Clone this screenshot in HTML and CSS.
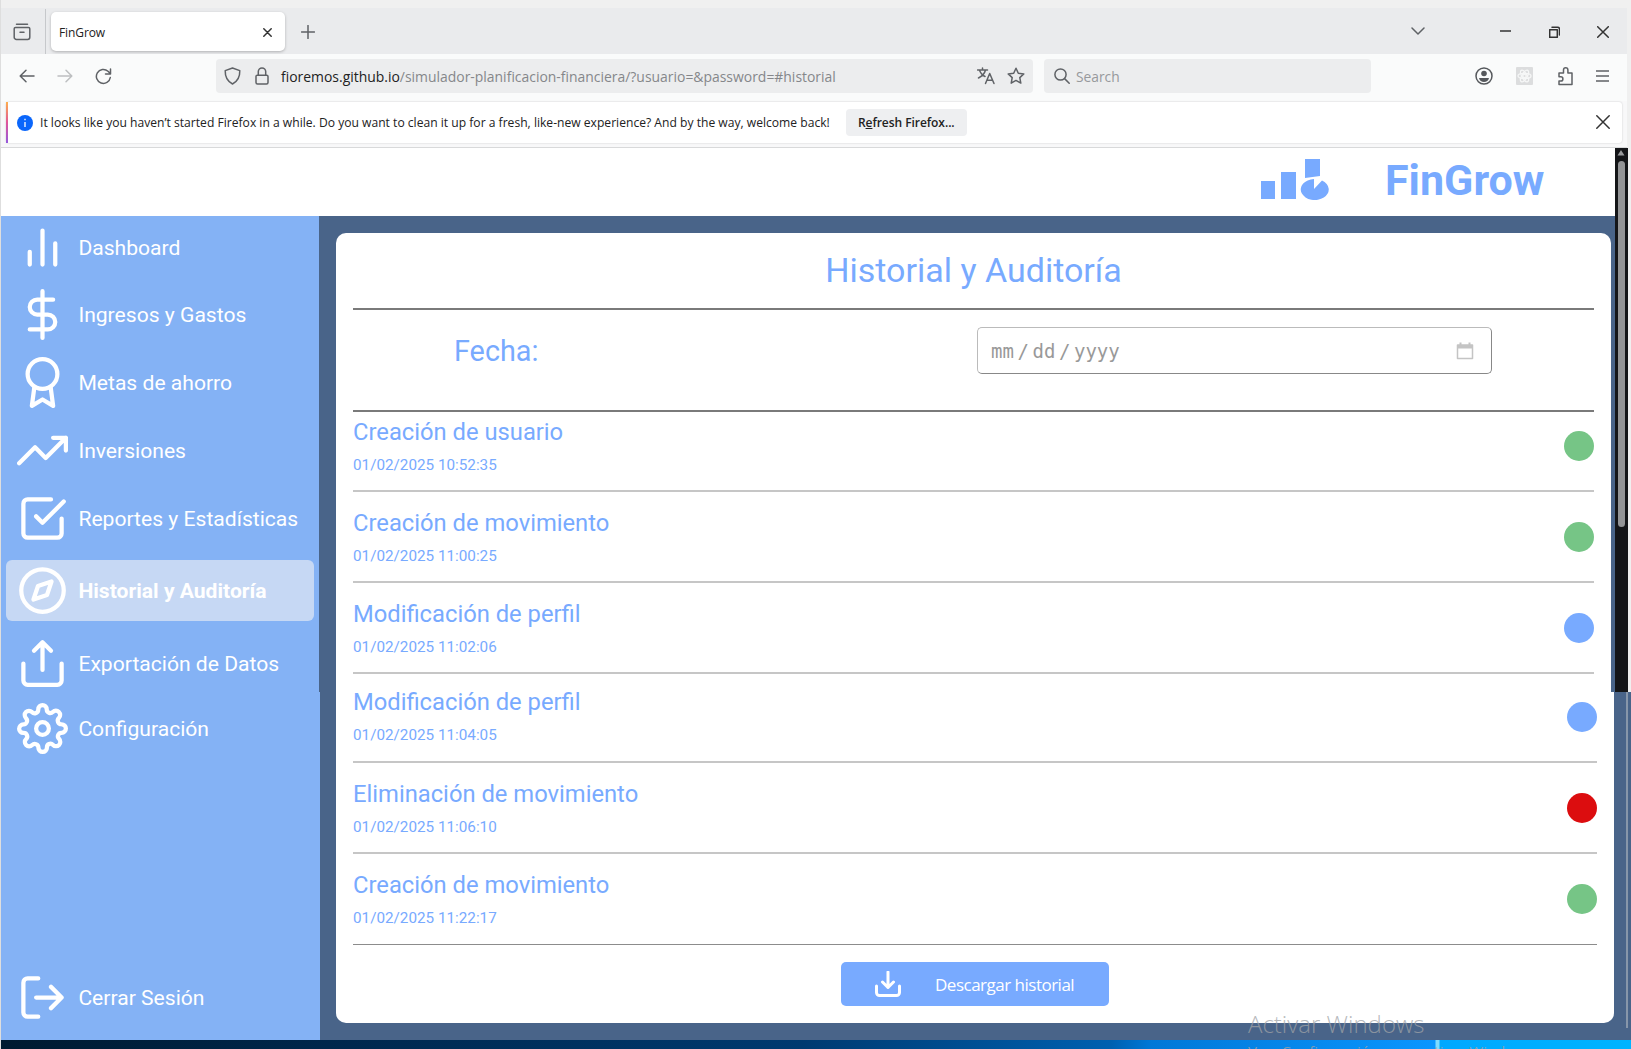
FILE: index.html
```
<!DOCTYPE html>
<html lang="es">
<head>
<meta charset="utf-8">
<title>FinGrow</title>
<link rel="stylesheet" href="styles.css">
</head>
<body>
<div class="window">
  <header class="tabstrip">
    <div class="view-button">
      <svg width="18" height="18" viewBox="0 0 18 18" class="line"><path d="M3.5 1.2h11M2.5 4.5h13a1.3 1.3 0 0 1 1.3 1.3v8.4a2.2 2.2 0 0 1-2.2 2.2H3.4a2.2 2.2 0 0 1-2.2-2.2V5.8a1.3 1.3 0 0 1 1.3-1.3zM7 9.3h4"/></svg>
    </div>
    <div class="tab">
      <span class="t ui tab-title">FinGrow</span>
      <svg width="9" height="9" viewBox="0 0 9 9" class="line dark"><path d="M.8.8l7.4 7.4M8.2.8L.8 8.2"/></svg>
    </div>
    <svg class="line plus" width="14" height="14" viewBox="0 0 14 14"><path d="M7 .5v13M.5 7h13"/></svg>
    <div class="window-controls">
      <svg class="line" width="14" height="9" viewBox="0 0 14 9"><path d="M1 1l6 6 6-6"/></svg>
      <svg class="line dark min" width="11" height="11" viewBox="0 0 11 11"><path d="M0 5h11"/></svg>
      <svg class="line dark max" width="11" height="12" viewBox="0 0 11 12"><path d="M.7 3.7h7.6v7.6H.7zM3 1.2h5.5a2 2 0 0 1 2 2V9"/></svg>
      <svg class="line dark close" width="12" height="12" viewBox="0 0 12 12"><path d="M.7.7l10.6 10.6M11.3.7L.7 11.3"/></svg>
    </div>
  </header>

  <div class="toolbar">
    <svg class="line" width="16" height="14" viewBox="0 0 16 14"><path d="M15 7H1.5M7 1.2L1.2 7 7 12.8"/></svg>
    <svg class="line faded fwd" width="16" height="14" viewBox="0 0 16 14"><path d="M1 7h13.5M9 1.2L14.8 7 9 12.8"/></svg>
    <svg class="line reload" width="17" height="17" viewBox="0 0 17 17"><path d="M15.3 9.500A7 7 0 1 1 13 3.200L15.300 5.600M15.500 1v5h-5"/></svg>
    <div class="urlbar">
      <svg class="line" width="17" height="18" viewBox="0 0 17 18"><path d="M8.500 1L15.800 3.600C16 10 13.500 14.500 8.500 17 3.500 14.500 1 10 1.200 3.600z"/></svg>
      <svg class="line lock" width="14" height="18" viewBox="0 0 14 18"><path d="M2.300 8.200h9.400a1.300 1.300 0 0 1 1.300 1.300v6a1.500 1.500 0 0 1-1.500 1.500h-9A1.500 1.500 0 0 1 1 15.500v-6a1.300 1.300 0 0 1 1.300-1.300zM3.300 8V4.600a3.700 3.700 0 0 1 7.400 0V8"/></svg>
      <span class="t ui url"><b>fioremos.github.io</b>/simulador-planificacion-financiera/?usuario=&amp;password=#historial</span>
      <svg class="line translate" width="18" height="18" viewBox="0 0 18 18"><path d="M.500 3h10M5.500 1v2M8.500 3C7.500 7 4.500 9.500 1.500 11M2.500 3C3.500 6.500 6 8.500 8 9.500M8.500 16.500L12.700 6.500 17 16.500M10 13.300h5.500"/></svg>
      <svg class="line" width="18" height="18" viewBox="0 0 18 18"><path d="M9 1.200l2.300 5 5.500.700-4 3.700 1 5.500L9 13.400l-4.800 2.700 1-5.500-4-3.700 5.500-.700z"/></svg>
    </div>
    <div class="searchbar">
      <svg class="line" width="16" height="16" viewBox="0 0 16 16"><circle cx="6.500" cy="6.500" r="5.600"/><path d="M10.600 10.600l4.600 4.600"/></svg>
      <span class="t ui search">Search</span>
    </div>
    <div class="actions">
      <svg width="18" height="18" viewBox="0 0 18 18"><circle cx="9" cy="9" r="8" fill="none" stroke="#55585c" stroke-width="1.500"/><circle cx="9" cy="6.500" r="2.800" fill="#55585c"/><path d="M4 11h10c-.500 2.500-2.500 4-5 4s-4.500-1.500-5-4z" fill="#55585c"/></svg>
      <svg class="ext" width="17" height="18" viewBox="0 0 17 18"><rect width="17" height="18" rx="1" fill="#dcddde"/><g fill="none" stroke="#f6f7f7" stroke-width="1.300"><circle cx="8.500" cy="9" r="1.700"/><ellipse cx="8.500" cy="9" rx="6.500" ry="2.600"/><ellipse cx="8.500" cy="9" rx="6.500" ry="2.600" transform="rotate(60 8.500 9)"/><ellipse cx="8.500" cy="9" rx="6.500" ry="2.600" transform="rotate(120 8.500 9)"/></g></svg>
      <svg class="line puzzle" width="16" height="19" viewBox="0 0 16 19"><path d="M1 6h4.500V3a2.200 2.200 0 0 1 4.400 0v3H14v11.500H1V14h1.800a2.100 2.100 0 0 0 0-4.200H1z"/></svg>
      <svg class="line menu" width="13" height="12" viewBox="0 0 13 12"><path d="M0 1h13M0 6h13M0 11h13"/></svg>
    </div>
  </div>

  <div class="notice-area">
    <div class="notice">
      <svg class="info" width="16" height="16" viewBox="0 0 16 16"><circle cx="8" cy="8" r="8" fill="#0a66fb"/><path d="M8 7v5M8 3.800v1.500" stroke="#fff" stroke-width="1.300"/></svg>
      <span class="t ui notice-text">It looks like you haven’t started Firefox in a while. Do you want to clean it up for a fresh, like-new experience? And by the way, welcome back!</span>
      <span class="refresh"><span class="t ui">R<u>e</u>fresh Firefox...</span></span>
      <svg class="line dark dismiss" width="14" height="14" viewBox="0 0 14 14"><path d="M.800.800l12.400 12.400M13.200.800L.800 13.200"/></svg>
    </div>
  </div>

  <div class="brand">
    <svg width="68" height="41" viewBox="0 0 68 41" fill="#78aaff"><path d="M0 22h14v18H0zM20 13h15v27H20zM44 0h15v17L44 19z"/><path d="M53 20v10l8-8.500a14 10.500 0 1 1-8-1.500z"/></svg>
    <h1 class="t">FinGrow</h1>
  </div>

  <div class="pane upper">
    <nav class="sidebar">
      <a class="item"><svg viewBox="0 0 24 24"><path d="M18 20V10M12 20V4M6 20v-6"/></svg><span class="t">Dashboard</span></a>
      <a class="item"><svg viewBox="0 0 24 24"><path d="M12 1v22M17 5H9.500a3.500 3.500 0 0 0 0 7h5a3.500 3.500 0 0 1 0 7H6"/></svg><span class="t">Ingresos y Gastos</span></a>
      <a class="item"><svg viewBox="0 0 24 24"><circle cx="12" cy="8" r="7"/><path d="M8.210 13.890L7 23l5-3 5 3-1.210-9.120"/></svg><span class="t">Metas de ahorro</span></a>
      <a class="item"><svg viewBox="0 0 24 24"><path d="M23 6l-9.500 9.500-5-5L1 18M17 6h6v6"/></svg><span class="t">Inversiones</span></a>
      <a class="item"><svg viewBox="0 0 24 24"><path d="M9 11l3 3L22 4M21 12v7a2 2 0 0 1-2 2H5a2 2 0 0 1-2-2V5a2 2 0 0 1 2-2h11"/></svg><span class="t">Reportes y Estadísticas</span></a>
      <a class="item active"><svg viewBox="0 0 24 24"><circle cx="12" cy="12" r="10"/><path d="M16.240 7.760l-2.120 6.360-6.360 2.120 2.120-6.360z"/></svg><span class="t">Historial y Auditoría</span></a>
      <a class="item"><svg viewBox="0 0 24 24"><path d="M3 12v8a2 2 0 0 0 2 2h14a2 2 0 0 0 2-2v-8M16 6l-4-4-4 4M12 2v13"/></svg><span class="t">Exportación de Datos</span></a>
    </nav>
    <main class="content">
      <section class="card">
        <h2 class="t">Historial y Auditoría</h2>
        <div class="filter">
          <label class="t">Fecha:</label>
          <div class="date-field"><span>mm</span><i>/</i><span>dd</span><i>/</i><span>yyyy</span>
            <svg width="18" height="18" viewBox="0 0 18 18"><path d="M1.500 3h15v13.500h-15z" fill="none" stroke="#c4c4c4" stroke-width="1.500" stroke-linejoin="round"/><path d="M1 3h16v3.500H1zM3.500 .500h2V3h-2zM12.500 .500h2V3h-2z" fill="#c4c4c4"/></svg>
          </div>
        </div>
        <div class="entry first"><div><h3 class="t">Creación de usuario</h3><time class="t">01/02/2025 10:52:35</time></div><span class="dot green"></span></div>
        <div class="entry"><div><h3 class="t">Creación de movimiento</h3><time class="t">01/02/2025 11:00:25</time></div><span class="dot green"></span></div>
        <div class="entry"><div><h3 class="t">Modificación de perfil</h3><time class="t">01/02/2025 11:02:06</time></div><span class="dot blue"></span></div>
      </section>
    </main>
  </div>

  <div class="pane lower">
    <nav class="sidebar">
      <a class="item"><svg viewBox="0 0 24 24"><circle cx="12" cy="12" r="3"/><path d="M19.400 15a1.650 1.650 0 0 0 .330 1.820l.060.060a2 2 0 0 1 0 2.830 2 2 0 0 1-2.830 0l-.060-.060a1.650 1.650 0 0 0-1.820-.330 1.650 1.650 0 0 0-1 1.510V21a2 2 0 0 1-2 2 2 2 0 0 1-2-2v-.090A1.650 1.650 0 0 0 9 19.400a1.650 1.650 0 0 0-1.820.330l-.060.060a2 2 0 0 1-2.830 0 2 2 0 0 1 0-2.830l.060-.060a1.650 1.650 0 0 0 .330-1.820 1.650 1.650 0 0 0-1.510-1H3a2 2 0 0 1-2-2 2 2 0 0 1 2-2h.090A1.650 1.650 0 0 0 4.600 9a1.650 1.650 0 0 0-.330-1.820l-.060-.060a2 2 0 0 1 0-2.830 2 2 0 0 1 2.830 0l.060.060a1.650 1.650 0 0 0 1.820.330H9a1.650 1.650 0 0 0 1-1.510V3a2 2 0 0 1 2-2 2 2 0 0 1 2 2v.090a1.650 1.650 0 0 0 1 1.510 1.650 1.650 0 0 0 1.820-.330l.060-.060a2 2 0 0 1 2.830 0 2 2 0 0 1 0 2.830l-.060.060a1.650 1.650 0 0 0-.330 1.820V9a1.650 1.650 0 0 0 1.510 1H21a2 2 0 0 1 2 2 2 2 0 0 1-2 2h-.090a1.650 1.650 0 0 0-1.510 1z"/></svg><span class="t">Configuración</span></a>
      <a class="item logout"><svg viewBox="0 0 24 24"><path d="M10 3H5a2 2 0 0 0-2 2v14a2 2 0 0 0 2 2h5M16 7l5 5-5 5M21 12H9"/></svg><span class="t">Cerrar Sesión</span></a>
    </nav>
    <main class="content">
      <section class="card">
        <div class="entry cut"><div><h3 class="t">Modificación de perfil</h3><time class="t">01/02/2025 11:04:05</time></div><span class="dot blue"></span></div>
        <div class="entry"><div><h3 class="t">Eliminación de movimiento</h3><time class="t">01/02/2025 11:06:10</time></div><span class="dot red"></span></div>
        <div class="entry last"><div><h3 class="t">Creación de movimiento</h3><time class="t">01/02/2025 11:22:17</time></div><span class="dot green"></span></div>
        <div class="download">
          <svg width="26" height="26" viewBox="0 0 26 26"><path d="M13 1v15.500M7.500 11l5.500 5.500L18.500 11M1.500 15v6.500a3 3 0 0 0 3 3h17a3 3 0 0 0 3-3V15"/></svg>
          <span class="t ui">Descargar historial</span>
        </div>
      </section>
      <div class="rail"></div>
    </main>
  </div>
  <div class="scrollbar"><svg width="12" height="10" viewBox="0 0 12 10"><path d="M6 2l3.500 5.500h-7z" fill="#9a9b9d"/></svg><span class="thumb"></span></div>
  <div class="taskbar"></div>
  <div class="watermark ui"><p class="t">Activar Windows</p><small class="t">Ve a Configuración para activar Windows.</small></div>
</div>
</body>
</html>
```
FILE: styles.css
```
* { box-sizing: border-box; }
body { margin: 0; width: 1631px; height: 1049px; overflow: hidden; background: #f0f0f0; font-family: Roboto, "Liberation Sans", sans-serif; }
h1, h2, h3, p { margin: 0; font-weight: 400; }
svg { display: block; flex: none; }
.t { white-space: nowrap; }
.ui { font-family: "Open Sans", "Noto Sans", sans-serif; }
.line { fill: none; stroke: #5f6266; stroke-width: 1.5; stroke-linecap: round; stroke-linejoin: round; }
.dark { stroke: #333; }
.faded { stroke: #bdbfc1; }

.window { position: relative; height: 1049px; padding-top: 8px; display: flex; flex-direction: column; border-left: 1px solid #dedede; overflow: hidden; }

.tabstrip { flex: none; display: flex; align-items: center; width: 1626px; height: 46px; padding-top: 1px; background: #eaebed; }
.view-button { display: flex; align-items: center; justify-content: center; width: 45px; height: 45px; padding-right: 2px; border-right: 1px solid #c6c8cb; }
.tab { display: flex; align-items: center; justify-content: space-between; width: 234px; height: 39px; margin-left: 5px; padding: 1px 13px 0 8px; background: #fff; border-radius: 5px; box-shadow: 0 1px 3px rgba(0, 0, 0, .25); }
.tab-title { font-size: 12px; letter-spacing: -.1px; color: #222; }
.plus { margin: 1px 0 0 16px; }
.window-controls { display: flex; align-items: center; margin-left: auto; padding-right: 18px; }
.min { margin-left: 75px; }
.max { margin-left: 38px; }
.close { margin-left: 37px; }

.toolbar { flex: none; display: flex; align-items: center; width: 1626px; height: 47px; padding: 0 18px 3px 18px; background: #fafbfb; }
.fwd { margin-left: 22px; }
.reload { margin-left: 22px; }
.urlbar { display: flex; align-items: center; width: 817px; height: 34px; margin-left: 104px; padding: 0 8px; background: #ecedee; border-radius: 4px; }
.lock { margin-left: 14px; }
.url { flex: 1; margin-left: 12px; font-size: 13.93px; color: #85878a; }
.url b { font-weight: 400; color: #222; }
.translate { margin-right: 12px; }
.searchbar { display: flex; align-items: center; width: 327px; height: 34px; margin-left: 11px; padding-left: 10px; background: #ecedee; border-radius: 4px; }
.search { margin-left: 6px; font-size: 13.8px; color: #97999c; }
.actions { display: flex; align-items: center; margin-left: auto; }
.ext { margin-left: 23px; }
.puzzle { margin-left: 25px; }
.menu { margin-left: 22px; }

.notice-area { flex: none; width: 1626px; height: 47px; padding: 1px 5px 4px; background: #f8f8f9; border-bottom: 1px solid #d8d9da; }
.notice { display: flex; align-items: center; height: 41px; padding-right: 12px; background: #fff; border-radius: 3px; border-left: 2px solid; border-image: linear-gradient(#ffb347, #e0559a, #9059e0) 1; box-shadow: 0 0 2px rgba(0, 0, 0, .2); }
.info { margin-left: 9px; }
.notice-text { margin-left: 7px; font-size: 12.11px; color: #222; }
.refresh { display: flex; align-items: center; justify-content: center; width: 121px; height: 27px; margin-left: 16px; background: #eeeff1; border-radius: 4px; font-size: 12px; font-weight: 600; letter-spacing: -.05px; color: #222; }
.dismiss { margin: 0 0 2px auto; }

.brand { flex: none; display: flex; align-items: flex-start; width: 1614px; height: 68px; padding: 11px 0 0 1260px; background: #fff; }
.brand h1 { margin: 0 0 0 56px; font-size: 43px; line-height: 43px; font-weight: 700; color: #78aaff; }

.pane { flex: none; display: flex; background: #496489; }
.upper { width: 1614px; height: 476px; }
.lower { height: 348px; }
.sidebar { flex: none; display: flex; flex-direction: column; gap: 16.9px; padding: 5.5px 5px 0 5px; background: #84b2f5; color: #fff; }
.upper .sidebar { width: 318px; }
.lower .sidebar { width: 319px; padding-top: 11px; padding-bottom: 17px; }
.item { display: flex; align-items: center; height: 51px; padding-left: 11px; font-size: 21.1px; }
.item svg { width: 51px; height: 51px; margin-right: 10.4px; fill: none; stroke: #fff; stroke-width: 2; stroke-linecap: round; stroke-linejoin: round; }
.item.active { height: 61px; margin: -1px 0 0; background: #c6d8f4; border-radius: 6px; font-weight: 700; }
.logout { margin-top: auto; }

.content { flex: 1; display: flex; padding: 17px 4px 0 17px; }
.lower .content { padding: 0 3px 17px 16px; }
.card { flex: 1; padding: 0 17px; background: #fff; border-radius: 10px 10px 0 0; color: #78aaff; }
.lower .card { border-radius: 0 0 10px 10px; }
.card h2 { height: 76.5px; line-height: 74px; border-bottom: 2px solid #7a7a7a; font-size: 34px; text-align: center; }
.filter { display: flex; align-items: center; height: 102px; padding: 0 102px 18px 101px; border-bottom: 2px solid #7a7a7a; }
.filter label { font-size: 28.8px; }
.date-field { display: flex; align-items: center; width: 515px; height: 47px; margin-left: auto; padding: 0 17px 0 13px; border: 1px solid #888; border-top-color: #bbb; border-left-color: #bbb; border-radius: 5px; font-family: "DejaVu Sans Mono", monospace; font-size: 19px; color: #999; }
.date-field i { width: 18.6px; text-align: center; font-style: normal; }
.date-field svg { margin-left: auto; }
.entry { display: flex; justify-content: space-between; height: 91px; padding-top: 16px; border-bottom: 2px solid #c6c6c6; }
.entry h3 { font-size: 23.75px; line-height: 30px; }
.entry time { display: block; margin-top: 8px; font-size: 15.25px; line-height: 20px; }
.dot { width: 30px; height: 30px; margin-top: 14px; border-radius: 50%; }
.green { background: #76c586; }
.blue { background: #78aaff; }
.red { background: #dc0d0f; }
.entry.first { height: 80.500px; padding-top: 5.500px; }
.entry.cut { height: 71px; padding-top: 0; }
.entry.cut > * { margin-top: -5px; }
.entry.cut .dot { margin-top: 10px; }
.entry.last { border-bottom: 1px solid #8c8c8c; }
.download { display: flex; align-items: center; width: 268px; height: 44px; margin: 17px auto 0; padding-left: 34px; background: #78aaff; border-radius: 5px; color: #fff; font-size: 17px; letter-spacing: -.5px; }
.download svg { margin-right: 34px; fill: none; stroke: #fff; stroke-width: 3; stroke-linecap: round; stroke-linejoin: round; }
.rail { width: 2px; height: 336px; margin-left: 12px; background: #8796aa; }

.scrollbar { position: absolute; left: 1614px; top: 148px; width: 13px; height: 544px; background: #141518; }
.thumb { display: block; width: 7px; height: 366px; margin: 3px 0 0 3px; border-radius: 4px; background: #939496; }
.taskbar { flex: none; height: 9px; background: linear-gradient(90deg, #001a30 0, #002a52 400px, #003a70 800px, #0060b0 1110px, #0078d7 1150px, #0a96ff 1434px, #7fdcff 1435px, #7fdcff 1438px, #00a8ff 1439px, #00b4ff 1631px); }
.watermark { position: absolute; left: 1247px; top: 1007px; color: rgba(160, 163, 167, .75); }
.watermark p { font-size: 24px; line-height: 34px; font-weight: 300; }
.watermark small { display: block; font-size: 15px; line-height: 20px; }
```
